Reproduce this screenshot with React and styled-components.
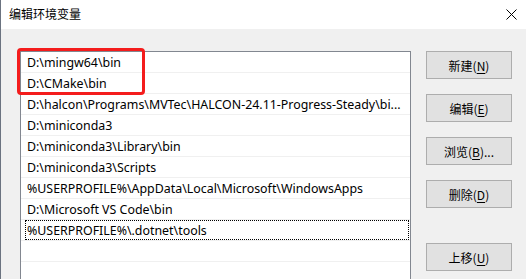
import React from "react";
import styled, { createGlobalStyle } from "styled-components";

const Global = createGlobalStyle`
  html, body { margin: 0; padding: 0; background: #f0f0f0; overflow: hidden; }
  body { font-family: "Noto Sans", "Noto Sans CJK SC", sans-serif; }
`;

const Window = styled.div`
  width: 526px;
  height: 279px;
  display: flex;
  flex-direction: column;
  box-sizing: border-box;
  border-left: 1px solid #6b7380;
  background: #f0f0f0;
  overflow: hidden;
`;

const TitleBar = styled.div`
  height: 29px;
  flex: none;
  background: #ffffff;
  display: flex;
  align-items: center;
  justify-content: space-between;
  padding: 0 9px 0 8px;
`;

const Title = styled.span`
  font-family: "Noto Sans CJK SC", sans-serif;
  font-size: 12px;
  color: #000;
  line-height: 1;
  margin-top: -1px;
`;

const CloseIcon = styled.svg`
  width: 11px;
  height: 11px;
  margin-top: -1px;
`;

const Body = styled.div`
  flex: 1;
  display: flex;
  gap: 15px;
  padding: 22px 0 0 19px;
  min-height: 0;
`;

const ListWrap = styled.div`
  position: relative;
  width: 391px;
  flex: none;
`;

const List = styled.div`
  box-sizing: border-box;
  height: 240px;
  border: 1px solid #828790;
  background: #ffffff;
  overflow: hidden;
`;

const Row = styled.div`
  position: relative;
  height: 20px;
  border-bottom: 1px solid #f0f0f0;
  padding: 0 2px 0 6px;
  display: flex;
  align-items: center;
  font-family: "Noto Sans", "Noto Sans CJK SC", sans-serif;
  font-size: 12.4px;
  color: #000;
  white-space: nowrap;
  overflow: hidden;

  &::after {
    content: "";
    display: ${(p) => (p.$focused ? "block" : "none")};
    position: absolute;
    top: 0;
    bottom: 0;
    left: 4px;
    right: 1px;
    border: 1px dotted #000;
  }
`;

const Highlight = styled.div`
  position: absolute;
  left: -3px;
  top: -3px;
  width: 128px;
  height: 47px;
  box-sizing: border-box;
  border: 3px solid #f41c1c;
  border-radius: 4px;
  pointer-events: none;
`;

const Buttons = styled.div`
  display: flex;
  flex-direction: column;
  gap: 15px;
  width: 86px;
`;

const Button = styled.button`
  box-sizing: border-box;
  height: 28px;
  width: 86px;
  margin-top: ${(p) => (p.$spaced ? "20px" : "0")};
  background: #e1e1e1;
  border: 1px solid #adadad;
  border-radius: 0;
  font-family: "Noto Sans CJK SC", sans-serif;
  font-size: 12px;
  color: #000;
  padding: 0;
  display: flex;
  align-items: center;
  justify-content: center;

  u { text-decoration-thickness: 1px; text-underline-offset: 2px; }
`;

const rows = [
  "D:\\mingw64\\bin",
  "D:\\CMake\\bin",
  "D:\\halcon\\Programs\\MVTec\\HALCON-24.11-Progress-Steady\\bi...",
  "D:\\miniconda3",
  "D:\\miniconda3\\Library\\bin",
  "D:\\miniconda3\\Scripts",
  "%USERPROFILE%\\AppData\\Local\\Microsoft\\WindowsApps",
  "D:\\Microsoft VS Code\\bin",
  "%USERPROFILE%\\.dotnet\\tools",
  "",
  "",
  "",
];

export default function App() {
  return (
    <>
      <Global />
      <Window>
        <TitleBar>
          <Title>编辑环境变量</Title>
          <CloseIcon viewBox="0 0 11 11">
            <path d="M0.5 0.5 L10.5 10.5 M10.5 0.5 L0.5 10.5" stroke="#000" strokeWidth="1" fill="none" />
          </CloseIcon>
        </TitleBar>
        <Body>
          <ListWrap>
            <List>
              {rows.map((r, i) => (
                <Row key={i} $focused={i === 8}>
                  {r}
                </Row>
              ))}
            </List>
            <Highlight />
          </ListWrap>
          <Buttons>
            <Button>新建(<u>N</u>)</Button>
            <Button>编辑(<u>E</u>)</Button>
            <Button>浏览(<u>B</u>)...</Button>
            <Button>删除(<u>D</u>)</Button>
            <Button $spaced>上移(<u>U</u>)</Button>
          </Buttons>
        </Body>
      </Window>
    </>
  );
}
